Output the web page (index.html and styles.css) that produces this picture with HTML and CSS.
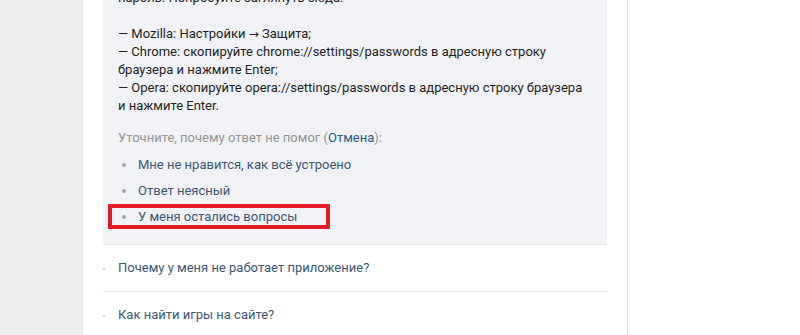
FILE: index.html
```html
<!DOCTYPE html>
<html lang="ru">
<head>
<meta charset="utf-8">
<link rel="stylesheet" href="styles.css">
</head>
<body>
<div class="page">
  <div class="side"></div>
  <div class="card">
    <div class="answer">
      <p class="text">пароль. Попробуйте заглянуть сюда.<br><br>— Mozilla: Настройки <span class="arrow">→</span> Защита;<br>— Chrome: скопируйте chrome://settings/passwords в адресную строку браузера и нажмите Enter;<br>— Opera: скопируйте opera://settings/passwords в адресную строку браузера и нажмите Enter.</p>
      <p class="ask">Уточните, почему ответ не помог (<a class="cancel">Отмена</a>):</p>
      <ul class="reasons">
        <li class="reason">Мне не нравится, как всё устроено</li>
        <li class="reason">Ответ неясный</li>
        <li class="reason marked">У меня остались вопросы</li>
      </ul>
    </div>
    <div class="faq">Почему у меня не работает приложение?</div>
    <div class="faq">Как найти игры на сайте?</div>
  </div>
  <div class="rest"></div>
</div>
</body>
</html>
```
FILE: styles.css
```css
html, body {
  margin: 0;
  padding: 0;
  background: #fff;
  overflow: hidden;
}
body {
  font-family: Roboto, "Noto Sans", sans-serif;
  font-size: 13px;
  line-height: 18px;
  color: #222;
}
.page {
  display: flex;
  height: 335px;
  overflow: hidden;
}
.side {
  width: 82px;
  flex: none;
  background: #edeef0;
}
.card {
  width: 504px;
  flex: none;
  padding: 0 20px;
  border-left: 1px solid #e4e6ea;
  border-right: 1px solid #e4e6ea;
  background: #fff;
}
.rest {
  flex: 1;
  background: #fff;
}
.answer {
  margin-top: -11px;
  background: #f0f2f5;
  padding: 0 15px 14px;
  border-bottom: 1px solid #e7e8ec;
}
.text {
  margin: 0;
  color: #1f1f1f;
}
.arrow {
  font-family: "DejaVu Sans", sans-serif;
  font-size: 12px;
}
.ask {
  margin: 14px 0 0;
  color: #939393;
}
.cancel {
  color: #2a5885;
}
.reasons {
  list-style: none;
  margin: 5px 0 0;
  padding: 0;
}
.reason {
  position: relative;
  height: 26px;
  line-height: 26px;
  padding-left: 20px;
  color: #3c5675;
}
.reason::before {
  content: "";
  position: absolute;
  left: 4px;
  top: 11px;
  width: 4px;
  height: 4px;
  border-radius: 50%;
  background: #a0a8b3;
}
.marked::after {
  content: "";
  position: absolute;
  left: -10px;
  top: 0;
  width: 222px;
  height: 25px;
  box-sizing: border-box;
  border: 4px solid #e11c25;
}
.faq {
  position: relative;
  padding: 14px 15px;
  color: #3c5675;
  border-bottom: 1px solid #e7e8ec;
}
.faq::before {
  content: "";
  position: absolute;
  left: 0;
  top: 23px;
  width: 2px;
  height: 2px;
  background: #d0d3d8;
}
```
